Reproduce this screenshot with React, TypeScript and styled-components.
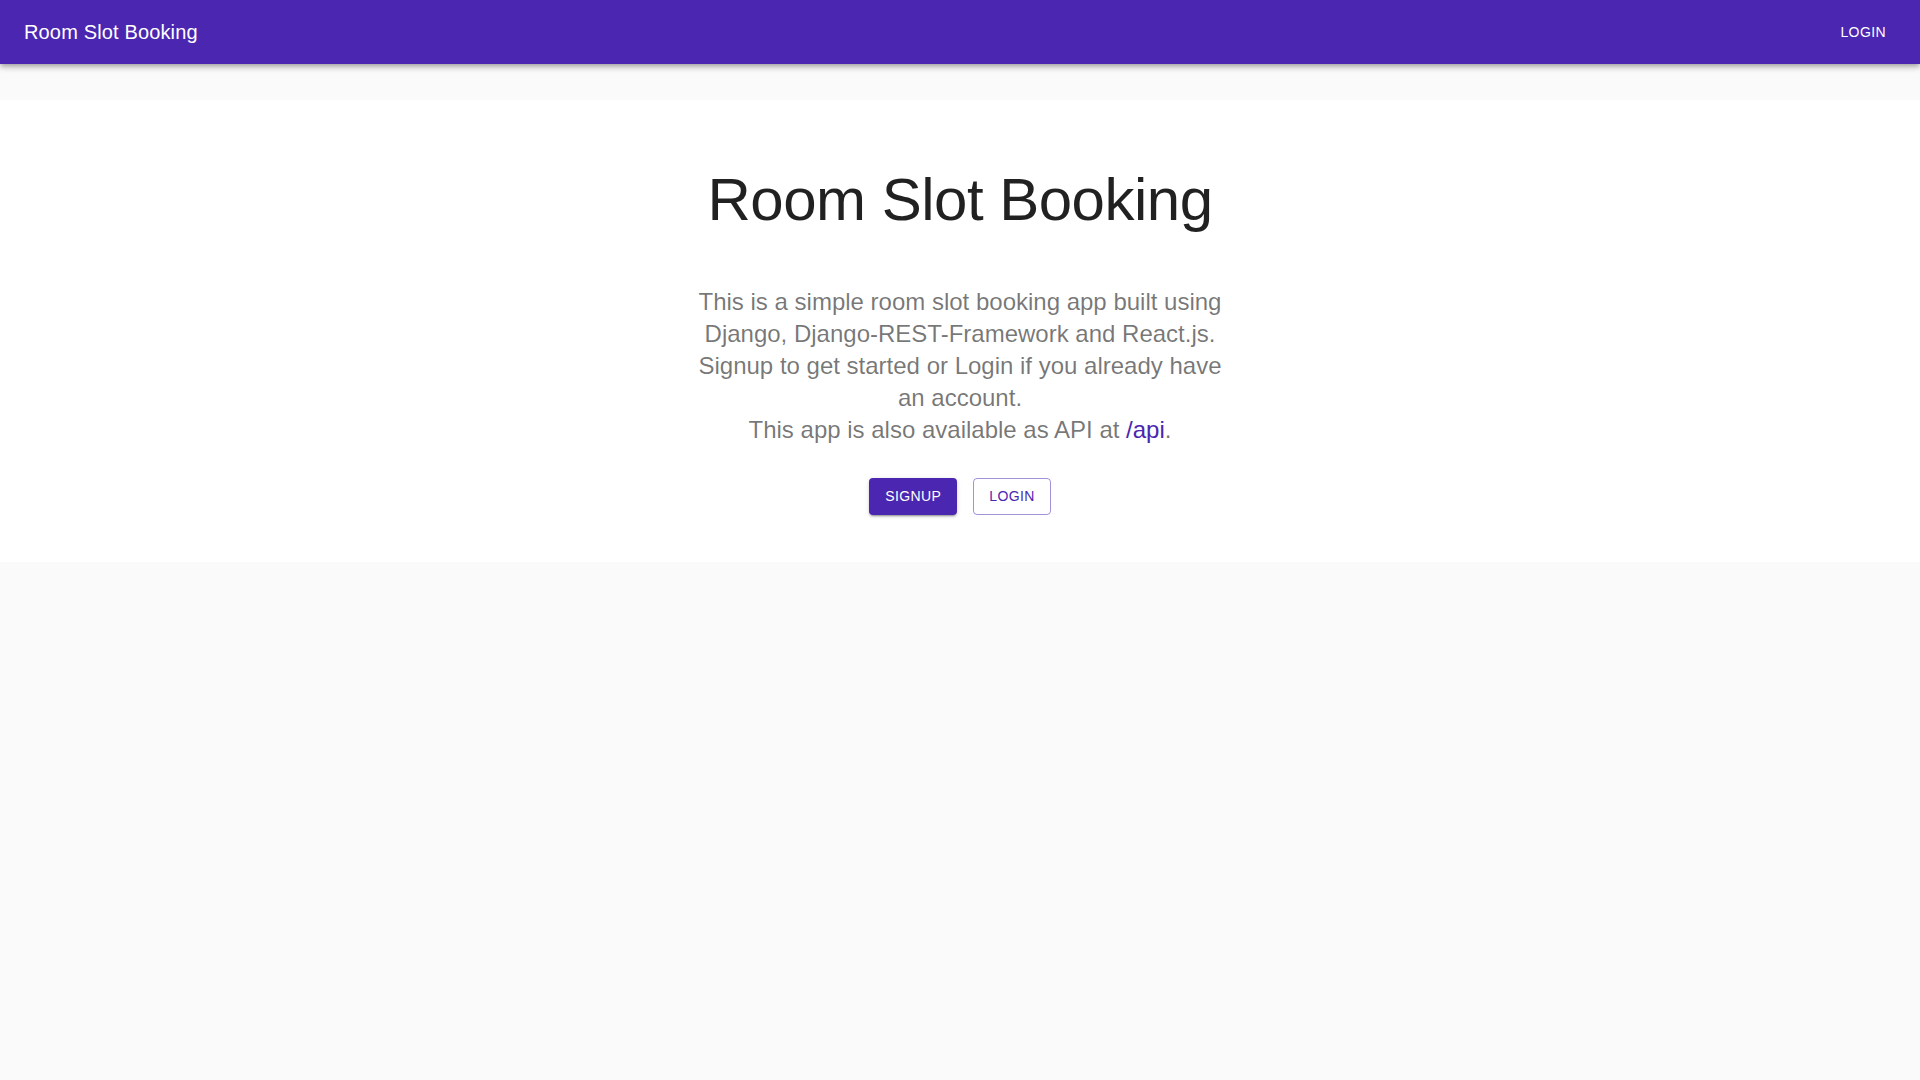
import React from "react";
import styled, { createGlobalStyle } from "styled-components";

const PRIMARY = "#4a26b1";

const GlobalStyle = createGlobalStyle`
  html, body {
    margin: 0;
    padding: 0;
    background: #fafafa;
    font-family: "Liberation Sans", Arial, Helvetica, sans-serif;
    -webkit-font-smoothing: antialiased;
  }
  * { box-sizing: border-box; }
`;

const Page = styled.div`
  min-height: 100vh;
  background: #fafafa;
  display: flex;
  flex-direction: column;
`;

const AppBar = styled.header`
  height: 64px;
  background: ${PRIMARY};
  color: #fff;
  display: flex;
  align-items: center;
  justify-content: space-between;
  padding: 0 26px 0 24px;
  box-shadow: 0px 2px 4px -1px rgba(0, 0, 0, 0.2),
    0px 4px 5px 0px rgba(0, 0, 0, 0.14), 0px 1px 10px 0px rgba(0, 0, 0, 0.12);
  position: relative;
  z-index: 2;
`;

const Brand = styled.h6`
  margin: 0;
  font-size: 20px;
  font-weight: 500;
  line-height: 1.6;
  letter-spacing: 0.0075em;
`;

const NavButton = styled.button`
  background: transparent;
  border: none;
  color: #fff;
  font-family: inherit;
  font-size: 14px;
  font-weight: 500;
  letter-spacing: 0.02857em;
  text-transform: uppercase;
  padding: 6px 8px;
  line-height: 1.75;
  border-radius: 4px;
  cursor: pointer;
`;

const Main = styled.main`
  margin-top: 36px;
`;

const Hero = styled.section`
  background: #fff;
  padding: 64px 0 47px;
`;

const Container = styled.div`
  max-width: 600px;
  margin: 0 auto;
  padding: 0 24px;
  display: flex;
  flex-direction: column;
  align-items: center;
  text-align: center;
`;

const Title = styled.h2`
  margin: 0 0 50px;
  font-size: 60px;
  font-weight: 400;
  line-height: 1.2;
  letter-spacing: -0.00833em;
  color: rgba(0, 0, 0, 0.87);
`;

const Lead = styled.p`
  margin: 0;
  font-size: 24px;
  font-weight: 400;
  line-height: 1.334;
  color: rgba(0, 0, 0, 0.54);
`;

const ApiLink = styled.a`
  color: ${PRIMARY};
  text-decoration: none;
`;

const Actions = styled.div`
  margin-top: 32px;
  display: flex;
  gap: 16px;
  justify-content: center;
`;

const ActionButton = styled.button<{ $variant: "contained" | "outlined" }>`
  font-family: inherit;
  font-size: 14px;
  font-weight: 500;
  letter-spacing: 0.02857em;
  text-transform: uppercase;
  line-height: 1.75;
  border-radius: 4px;
  cursor: pointer;
  padding: ${(p) => (p.$variant === "contained" ? "6px 16px" : "5px 15px")};
  background: ${(p) => (p.$variant === "contained" ? PRIMARY : "transparent")};
  color: ${(p) => (p.$variant === "contained" ? "#fff" : PRIMARY)};
  border: ${(p) =>
    p.$variant === "contained" ? "none" : "1px solid rgba(74, 38, 177, 0.5)"};
  box-shadow: ${(p) =>
    p.$variant === "contained"
      ? "0px 3px 1px -2px rgba(0,0,0,0.2), 0px 2px 2px 0px rgba(0,0,0,0.14), 0px 1px 5px 0px rgba(0,0,0,0.12)"
      : "none"};
`;

export default function App() {
  return (
    <Page>
      <GlobalStyle />
      <AppBar>
        <Brand>Room Slot Booking</Brand>
        <NavButton>Login</NavButton>
      </AppBar>
      <Main>
        <Hero>
          <Container>
            <Title>Room Slot Booking</Title>
            <Lead>
              This is a simple room slot booking app built using Django,
              Django-REST-Framework and React.js. Signup to get started or Login
              if you already have an account.
              <br />
              This app is also available as API at{" "}
              <ApiLink href="#">/api</ApiLink>.
            </Lead>
            <Actions>
              <ActionButton $variant="contained">Signup</ActionButton>
              <ActionButton $variant="outlined">Login</ActionButton>
            </Actions>
          </Container>
        </Hero>
      </Main>
    </Page>
  );
}
